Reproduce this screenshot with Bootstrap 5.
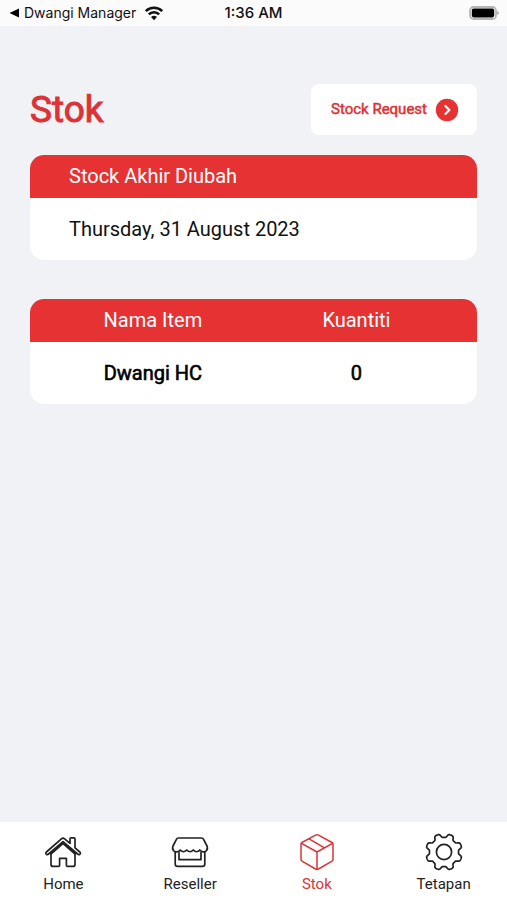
<!DOCTYPE html>
<html lang="ms">
<head>
<meta charset="utf-8">
<meta name="viewport" content="width=device-width, initial-scale=1">
<title>Stok</title>
<link href="https://cdn.jsdelivr.net/npm/bootstrap@5.3.0/dist/css/bootstrap.min.css" rel="stylesheet">
<style>
:root { --brand: #e63232; --page: #f0f2f6; }
body { background: var(--page); color: #111; font-family: Roboto, sans-serif; }
svg { display: block; fill: none; stroke: currentColor; stroke-linecap: round; stroke-linejoin: round; }
.status-bar { height: 26px; background: #fbfbfc; font: 14px/20px Inter, sans-serif; }
.status-bar a { color: #111; }
.status-clock { font-weight: 500; font-size: 15px; }
.wifi { stroke-linecap: butt; }
.page-main { padding: 58px 30px 40px; }
.page-title { color: #dd3236; font-size: 37px; line-height: 44px; font-weight: 400; -webkit-text-stroke: 1px; }
.request-btn { background: #fff; color: #dd3236; border-radius: 8px; height: 51px; padding: 0 18px 0 20px; font-size: 15px; -webkit-text-stroke: 0.5px; }
.panel { background: #fff; border-radius: 14px; overflow: hidden; font-size: 20px; line-height: 24px; }
.panel + .panel { margin-top: 39px; }
.panel-head { background: var(--brand); color: #fff; font-size: 20px; line-height: 24px; padding: 9px 39px 10px; }
.panel-body { padding: 19px 39px; }
.stock-table { table-layout: fixed; text-align: center; }
.stock-table th, .stock-table td { padding: 19px 0; }
.stock-table thead th { background: var(--brand); color: #fff; font-weight: 400; padding-top: 9px; padding-bottom: 10px; }
.stock-table tr > :first-child { width: 55%; }
.stock-table tr > :last-child { padding-right: 40px; }
.stock-table tbody { color: #000; -webkit-text-stroke: 0.6px; }
.tab-bar { background: #fff; height: 78px; padding-top: 10px; font-size: 15px; line-height: 20px; }
.tab-bar a { color: #222; gap: 2px; }
.tab-bar a.active { color: #dd3236; }
</style>
<script src="https://cdn.jsdelivr.net/npm/bootstrap@5.3.0/dist/js/bootstrap.bundle.min.js" defer></script>
</head>
<body class="min-vh-100 d-flex flex-column">
<header class="status-bar row g-0 align-items-center px-2">
  <div class="col d-flex align-items-center gap-2">
    <a href="#" class="d-flex align-items-center gap-1 text-decoration-none text-nowrap">
      <svg width="12" height="10" viewBox="0 0 12 10"><path d="M11 0.5v9L1.5 5z" fill="#000" stroke="none"/></svg>
      Dwangi Manager
    </a>
    <svg class="wifi" width="20" height="16" viewBox="0 0 20 16" stroke-width="2.6"><path d="M1.8 6.2a11.6 11.6 0 0 1 16.4 0M4.8 9.4a7.4 7.4 0 0 1 10.4 0"/><path d="M10 15.2L7 12.1a4.3 4.3 0 0 1 6 0z" fill="currentColor" stroke="none"/></svg>
  </div>
  <div class="col-auto status-clock">1:36 AM</div>
  <div class="col d-flex justify-content-end">
    <svg width="30" height="14" viewBox="0 0 30 14"><rect x="1" y="1" width="26" height="12" rx="3.5" stroke="#b5b5b5" stroke-width="1.8"/><rect x="2.8" y="2.6" width="22.4" height="8.8" rx="1.8" fill="#000" stroke="none"/><path d="M28.2 5v4q1.8-.8 1.8-2t-1.8-2z" fill="#aaa" stroke="none"/></svg>
  </div>
</header>

<main class="page-main flex-grow-1">
  <div class="d-flex justify-content-between align-items-center mb-3 pb-1">
    <h1 class="page-title mb-0">Stok</h1>
    <button type="button" class="request-btn border-0 d-flex align-items-center gap-2">
      Stock Request
      <svg width="24" height="24" viewBox="0 0 24 24"><circle cx="12" cy="12" r="11.2" fill="#e63232" stroke="none"/><path d="M10.4 8l4 4-4 4" stroke="#fff" stroke-width="2.2"/></svg>
    </button>
  </div>

  <section class="panel">
    <h2 class="panel-head fw-normal mb-0">Stock Akhir Diubah</h2>
    <p class="panel-body mb-0">Thursday, 31 August 2023</p>
  </section>

  <section class="panel">
    <table class="stock-table w-100">
      <thead><tr><th scope="col">Nama Item</th><th scope="col">Kuantiti</th></tr></thead>
      <tbody><tr><td>Dwangi HC</td><td>0</td></tr></tbody>
    </table>
  </section>
</main>

<nav class="tab-bar row g-0 text-center" aria-label="Menu">
  <a href="#" class="col d-flex flex-column align-items-center text-decoration-none">
    <svg width="40" height="40" viewBox="0 0 40 40" stroke-width="1.7"><path d="M3.4 20L18.4 6.8Q20 5.4 21.6 6.8L27 11.4V6.8Q27 5.8 28 5.8H31Q32 5.8 32 6.8V15.8L36.8 20Q38 21.2 36.9 22.2Q35.8 23 34.6 22L20 9.6L5.6 22Q4.4 23 3.3 22.2Q2.2 21.2 3.4 20z"/><path d="M8 21.5V32.4Q8 34.4 10 34.4H15.4Q16.6 34.4 16.6 33.2V26.4H23.4V33.2Q23.4 34.4 24.6 34.4H30Q32 34.4 32 32.4V21.5"/><path d="M8 21.6L20 11.2L32 21.6" stroke-width="2.2"/></svg>
    <span>Home</span>
  </a>
  <a href="#" class="col d-flex flex-column align-items-center text-decoration-none">
    <svg width="40" height="40" viewBox="0 0 40 40" stroke-width="1.7"><path d="M8.5 6H31.5Q33 6 33.6 7.3L37 14Q38.2 17 36.2 18.8Q33 21.5 29.8 18Q26.5 21.5 23.3 18Q20 21.5 16.7 18Q13.5 21.5 10.2 18Q7 21.5 3.8 18.8Q1.8 17 3 14L6.4 7.3Q7 6 8.5 6z"/><path d="M5.2 20.2V32Q5.2 34.4 7.6 34.4H32.4Q34.8 34.4 34.8 32V20.2M9 20.5V27.6H31V20.5"/></svg>
    <span>Reseller</span>
  </a>
  <a href="#" class="active col d-flex flex-column align-items-center text-decoration-none" aria-current="page">
    <svg width="40" height="40" viewBox="0 0 40 40" stroke-width="1.5"><path d="M18.5 3.2Q20 2.4 21.5 3.2L35 10.5Q36 11.1 36 12.2V27.2Q36 28.5 35 29.1L21.5 37Q20 37.8 18.5 37L5 29.1Q4 28.5 4 27.2V12.2Q4 11.1 5 10.5z"/><path d="M4.5 11.3L20 20L35.5 11.3M20 20V37.3M12 6.8L27.5 15.8"/></svg>
    <span>Stok</span>
  </a>
  <a href="#" class="col d-flex flex-column align-items-center text-decoration-none">
    <svg width="40" height="40" viewBox="0 0 40 40" stroke-width="1.7"><circle cx="20" cy="20" r="7.6"/><path id="gear"/></svg>
    <span>Tetapan</span>
  </a>
</nav>
<script>
// Gear outline: eight rounded teeth around the hub
const points = [];
for (let i = 0; i <= 240; i++) {
  const a = i / 240 * Math.PI * 2;
  const r = 16.4 + 1.9 * Math.tanh(2.2 * Math.cos(8 * (a - Math.PI / 8)));
  points.push((20 + r * Math.cos(a)).toFixed(2) + ' ' + (20 + r * Math.sin(a)).toFixed(2));
}
document.getElementById('gear').setAttribute('d', 'M' + points.join('L') + 'z');
</script>
</body>
</html>
